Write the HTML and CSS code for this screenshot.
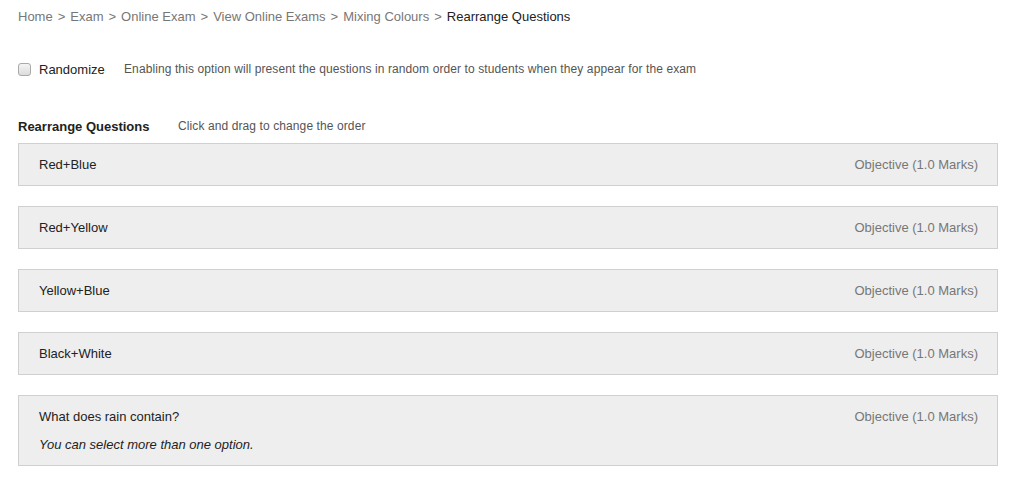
FILE: index.html
```html
<!DOCTYPE html>
<html lang="en">
<head>
  <meta charset="UTF-8" />
  <meta name="viewport" content="width=device-width, initial-scale=1" />
  <title>Rearrange Questions</title>
  <link rel="stylesheet" href="styles.css">
</head>
<body>
  <div class="breadcrumb">
    <a href="#">Home</a><span class="sep">&gt;</span><a href="#">Exam</a><span class="sep">&gt;</span><a href="#">Online Exam</a><span class="sep">&gt;</span><a href="#">View Online Exams</a><span class="sep">&gt;</span><a href="#">Mixing Colours</a><span class="sep">&gt;</span><span class="current">Rearrange Questions</span>
  </div>

  <div class="randomize-row">
    <label class="randomize">
      <input type="checkbox" id="randomize" />
      <span>Randomize</span>
    </label>
    <span class="hint">Enabling this option will present the questions in random order to students when they appear for the exam</span>
  </div>

  <div class="section-head">
    <h3>Rearrange Questions</h3>
    <span class="hint">Click and drag to change the order</span>
  </div>

  <ul class="question-list">
    <li class="question">
      <div class="question-row">
        <span class="title">Red+Blue</span>
        <span class="type">Objective (1.0 Marks)</span>
      </div>
    </li>
    <li class="question">
      <div class="question-row">
        <span class="title">Red+Yellow</span>
        <span class="type">Objective (1.0 Marks)</span>
      </div>
    </li>
    <li class="question">
      <div class="question-row">
        <span class="title">Yellow+Blue</span>
        <span class="type">Objective (1.0 Marks)</span>
      </div>
    </li>
    <li class="question">
      <div class="question-row">
        <span class="title">Black+White</span>
        <span class="type">Objective (1.0 Marks)</span>
      </div>
    </li>
    <li class="question">
      <div class="question-row">
        <span class="title">What does rain contain?</span>
        <span class="type">Objective (1.0 Marks)</span>
      </div>
      <p class="note">You can select more than one option.</p>
    </li>
  </ul>
</body>
</html>
```

FILE: styles.css
```css
body {
  font-family: "Liberation Sans", Arial, sans-serif;
  font-size: 13px;
  line-height: 15px;
  color: #222;
  background: #fff;
  margin: 0;
  padding: 9px 19px 0 18px;
}

.breadcrumb {
  color: #777;
}

.breadcrumb a {
  color: #777;
  text-decoration: none;
}

.breadcrumb .sep {
  margin: 0 5px;
}

.breadcrumb .current {
  color: #222;
}

.randomize-row {
  display: flex;
  align-items: center;
  margin-top: 38px;
}

.randomize {
  display: flex;
  align-items: center;
  width: 106px;
}

.randomize input {
  appearance: none;
  -webkit-appearance: none;
  margin: 0 8px 0 0;
  width: 13px;
  height: 13px;
  border: 1px solid #a9a9a9;
  border-radius: 3px;
  background: linear-gradient(#f4f4f4, #dcdcdc);
}

.hint {
  font-size: 12px;
  color: #555;
  letter-spacing: 0.1px;
}

.section-head {
  display: flex;
  align-items: center;
  margin-top: 42px;
}

.section-head h3 {
  margin: 0;
  font-size: 13px;
  font-weight: bold;
  width: 160px;
}

.question-list {
  list-style: none;
  margin: 9px 0 0;
  padding: 0;
}

.question {
  background: #eee;
  border: 1px solid #d0d0d0;
  padding: 13px 19px 13px 20px;
  margin-bottom: 20px;
  cursor: move;
}

.question-row {
  display: flex;
  justify-content: space-between;
}

.type {
  color: #777;
}

.note {
  margin: 13px 0 0;
  font-style: italic;
}
```
